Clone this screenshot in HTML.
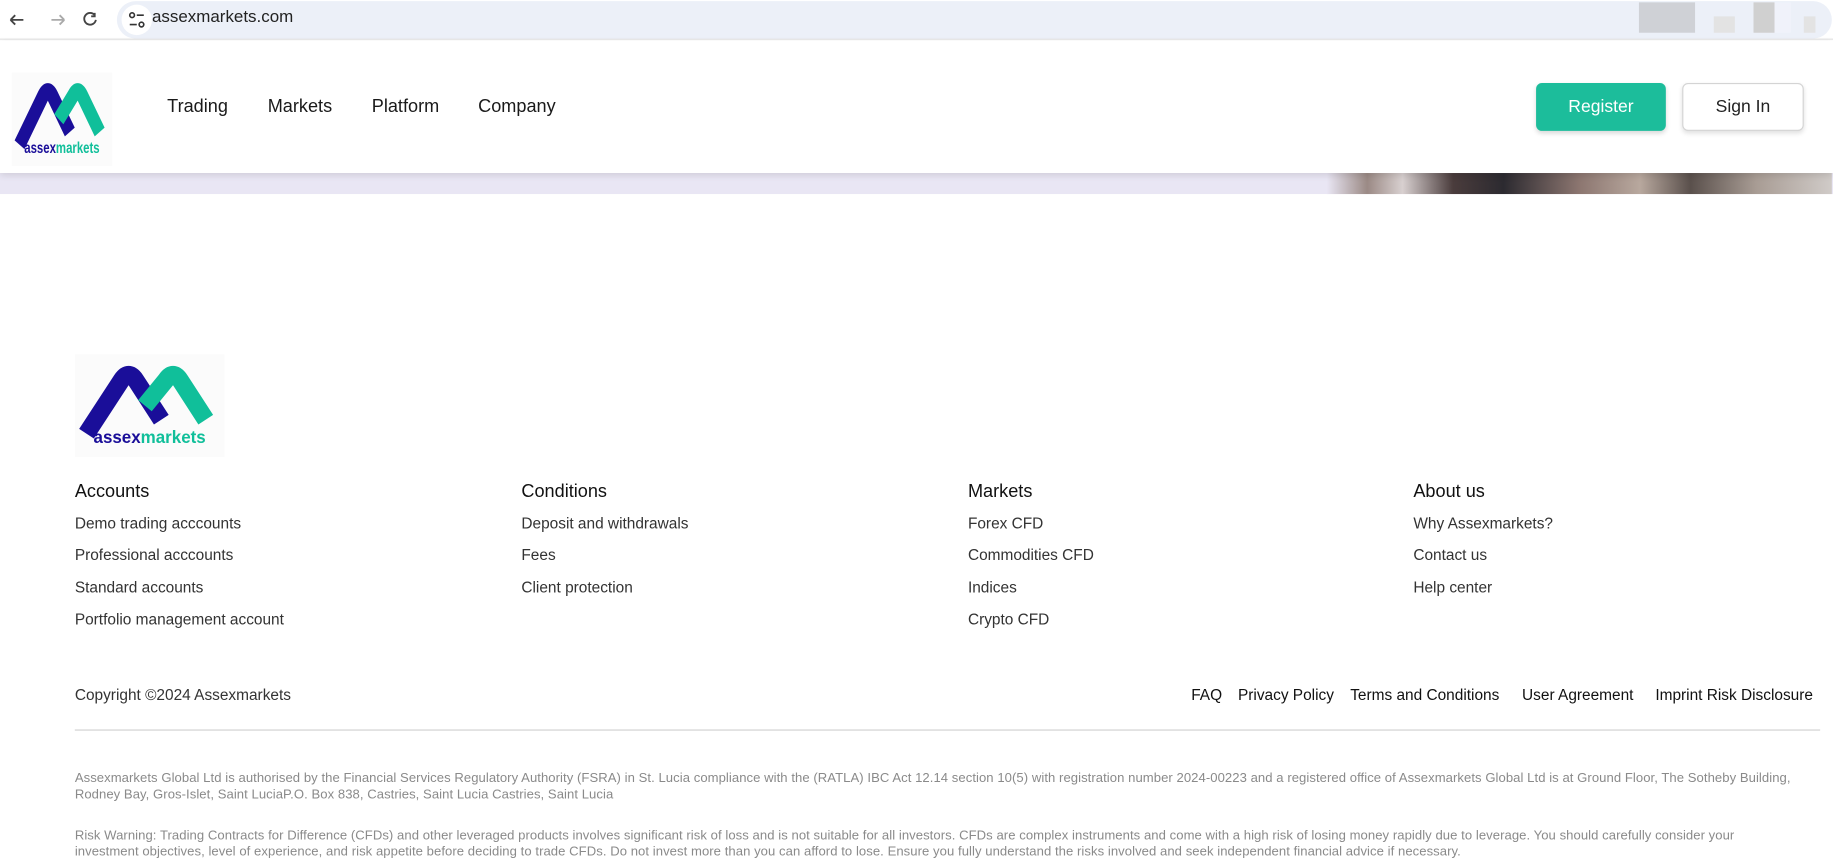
<!DOCTYPE html>
<html><head><meta charset="utf-8"><style>
*{margin:0;padding:0;box-sizing:border-box}
html,body{width:1833px;height:860px;overflow:hidden;background:#fff}
body{font-family:"Liberation Sans",Arial,sans-serif;position:relative}
#w{position:absolute;left:0;top:0;width:1568px;height:736px;transform:scale(1.16901);transform-origin:0 0}
.abs{position:absolute}
.chrome{top:0;left:0;width:1568px;height:34px;background:#fff;border-bottom:1px solid #e3e3e3}
.url{left:100px;top:1px;width:1467px;height:32px;background:#ecf0f8;border-radius:16px}
.nav{font-size:15.5px;color:#1a1a1a;top:83px}
.btn{top:71px;height:41px;border-radius:5px;font-size:15px;display:flex;align-items:center;justify-content:center}
.f h4{font-weight:normal;font-size:15.5px;color:#111;margin-bottom:10px}
.f a{display:block;font-size:13.2px;color:#333;text-decoration:none;height:27.3px}
.disc{font-size:11.2px;letter-spacing:.05px;color:#8a8a8a;line-height:14px;white-space:nowrap}
.bl{font-size:13.2px;color:#111;top:587px}
</style></head><body><div id="w">
<div class="abs chrome"></div>
<div class="abs url"></div>
<svg class="abs" style="left:6px;top:8px" width="80" height="18" viewBox="0 0 80 18" fill="none" stroke="#444" stroke-width="1.6">
<path d="M3 9h11M3 9l4-4M3 9l4 4"/><path stroke="#aaa" d="M38 9h11M49 9l-4-4M49 9l-4 4"/>
<path d="M75 5a5 5 0 1 0 1 4M75 3v3h-3"/></svg>
<div class="abs" style="left:104px;top:4px;width:26px;height:26px;border-radius:13px;background:#fff"></div>
<svg class="abs" style="left:109px;top:9px" width="16" height="16" viewBox="0 0 16 16" fill="none" stroke="#333" stroke-width="1.4"><circle cx="4" cy="4" r="2"/><path d="M8 4h6M2 12h6"/><circle cx="12" cy="12" r="2"/></svg>
<div class="abs" style="left:130px;top:7px;font-size:14.5px;color:#222">assexmarkets.com</div>
<div class="abs" style="left:1402px;top:2px;width:48px;height:26px;background:#cfd1d6"></div>
<div class="abs" style="left:1466px;top:14px;width:18px;height:14px;background:#e3e3e3"></div>
<div class="abs" style="left:1500px;top:2px;width:18px;height:26px;background:#d0d0d0"></div>
<div class="abs" style="left:1518px;top:2px;width:14px;height:26px;background:#f0f2fa"></div>
<div class="abs" style="left:1543px;top:14px;width:10px;height:14px;background:#e3e3e3"></div>

<div class="abs" style="left:0;top:148px;width:1568px;height:18px;background:#e9e6f4"></div>
<div class="abs" style="left:1135px;top:148px;width:432px;height:18px;background:linear-gradient(90deg,#e9e6f4,#9b8a85 8%,#d8d0d0 15%,#4a3c3c 25%,#2c2a30 35%,#8c7670 50%,#b8a89e 62%,#5a504c 72%,#a89c94 85%,#d0cbc8)"></div>
<div class="abs" style="left:0;top:35px;width:1568px;height:113px;background:#fff;box-shadow:0 2px 6px rgba(0,0,0,.12)"></div>

<svg class="abs" style="left:10px;top:62px" width="86" height="80" viewBox="0 0 128 88" preserveAspectRatio="none">
<rect width="128" height="88" fill="#fbfbfb"/>
<path d="M10 68 L40 22 Q46 13 52 22 L74 56" fill="none" stroke="#1a0e99" stroke-width="15" stroke-linejoin="round"/>
<path d="M60 44 L78 22 Q84 13 90 22 L112 56" fill="none" stroke="#10bf9a" stroke-width="15" stroke-linejoin="round"/>
<text x="16" y="76" font-family="Liberation Sans" font-weight="bold" font-size="15" textLength="96" lengthAdjust="spacingAndGlyphs" fill="#1a0e99">assex<tspan fill="#10bf9a">markets</tspan></text>
</svg>
<div class="abs nav" style="left:143px">Trading</div>
<div class="abs nav" style="left:229px">Markets</div>
<div class="abs nav" style="left:318px">Platform</div>
<div class="abs nav" style="left:409px">Company</div>
<div class="abs btn" style="left:1314px;width:111px;background:#1cbd9b;color:#fff;box-shadow:0 2px 4px rgba(0,0,0,.15)">Register</div>
<div class="abs btn" style="left:1439px;width:104px;background:#fff;color:#222;border:1px solid #d4d4d4;box-shadow:0 2px 4px rgba(0,0,0,.12)">Sign In</div>

<svg class="abs" style="left:64px;top:303px" width="128" height="88" viewBox="0 0 128 88">
<rect width="128" height="88" fill="#fbfbfb"/>
<path d="M10 68 L40 22 Q46 13 52 22 L74 56" fill="none" stroke="#1a0e99" stroke-width="15" stroke-linejoin="round"/>
<path d="M60 44 L78 22 Q84 13 90 22 L112 56" fill="none" stroke="#10bf9a" stroke-width="15" stroke-linejoin="round"/>
<text x="16" y="76" font-family="Liberation Sans" font-weight="bold" font-size="15" textLength="96" lengthAdjust="spacingAndGlyphs" fill="#1a0e99">assex<tspan fill="#10bf9a">markets</tspan></text>
</svg>

<div class="abs f" style="left:64px;top:412px"><h4>Accounts</h4><a>Demo trading acccounts</a><a>Professional acccounts</a><a>Standard accounts</a><a>Portfolio management account</a></div>
<div class="abs f" style="left:446px;top:412px"><h4>Conditions</h4><a>Deposit and withdrawals</a><a>Fees</a><a>Client protection</a></div>
<div class="abs f" style="left:828px;top:412px"><h4>Markets</h4><a>Forex CFD</a><a>Commodities CFD</a><a>Indices</a><a>Crypto CFD</a></div>
<div class="abs f" style="left:1209px;top:412px"><h4>About us</h4><a>Why Assexmarkets?</a><a>Contact us</a><a>Help center</a></div>

<div class="abs" style="left:64px;top:587px;font-size:13.2px;color:#333">Copyright ©2024 Assexmarkets</div>
<div class="abs bl" style="left:1019px">FAQ</div>
<div class="abs bl" style="left:1059px">Privacy Policy</div>
<div class="abs bl" style="left:1155px">Terms and Conditions</div>
<div class="abs bl" style="left:1302px">User Agreement</div>
<div class="abs bl" style="left:1416px">Imprint Risk Disclosure</div>
<div class="abs" style="left:64px;top:624px;width:1493px;height:1px;background:#d0d0d0"></div>

<div class="abs disc" style="left:64px;top:659px">Assexmarkets Global Ltd is authorised by the Financial Services Regulatory Authority (FSRA) in St. Lucia compliance with the (RATLA) IBC Act 12.14 section 10(5) with registration number 2024-00223 and a registered office of Assexmarkets Global Ltd is at Ground Floor, The Sotheby Building,<br>Rodney Bay, Gros-Islet, Saint LuciaP.O. Box 838, Castries, Saint Lucia Castries, Saint Lucia</div>
<div class="abs disc" style="left:64px;top:708px">Risk Warning: Trading Contracts for Difference (CFDs) and other leveraged products involves significant risk of loss and is not suitable for all investors. CFDs are complex instruments and come with a high risk of losing money rapidly due to leverage. You should carefully consider your<br>investment objectives, level of experience, and risk appetite before deciding to trade CFDs. Do not invest more than you can afford to lose. Ensure you fully understand the risks involved and seek independent financial advice if necessary.</div>
</div></body></html>
